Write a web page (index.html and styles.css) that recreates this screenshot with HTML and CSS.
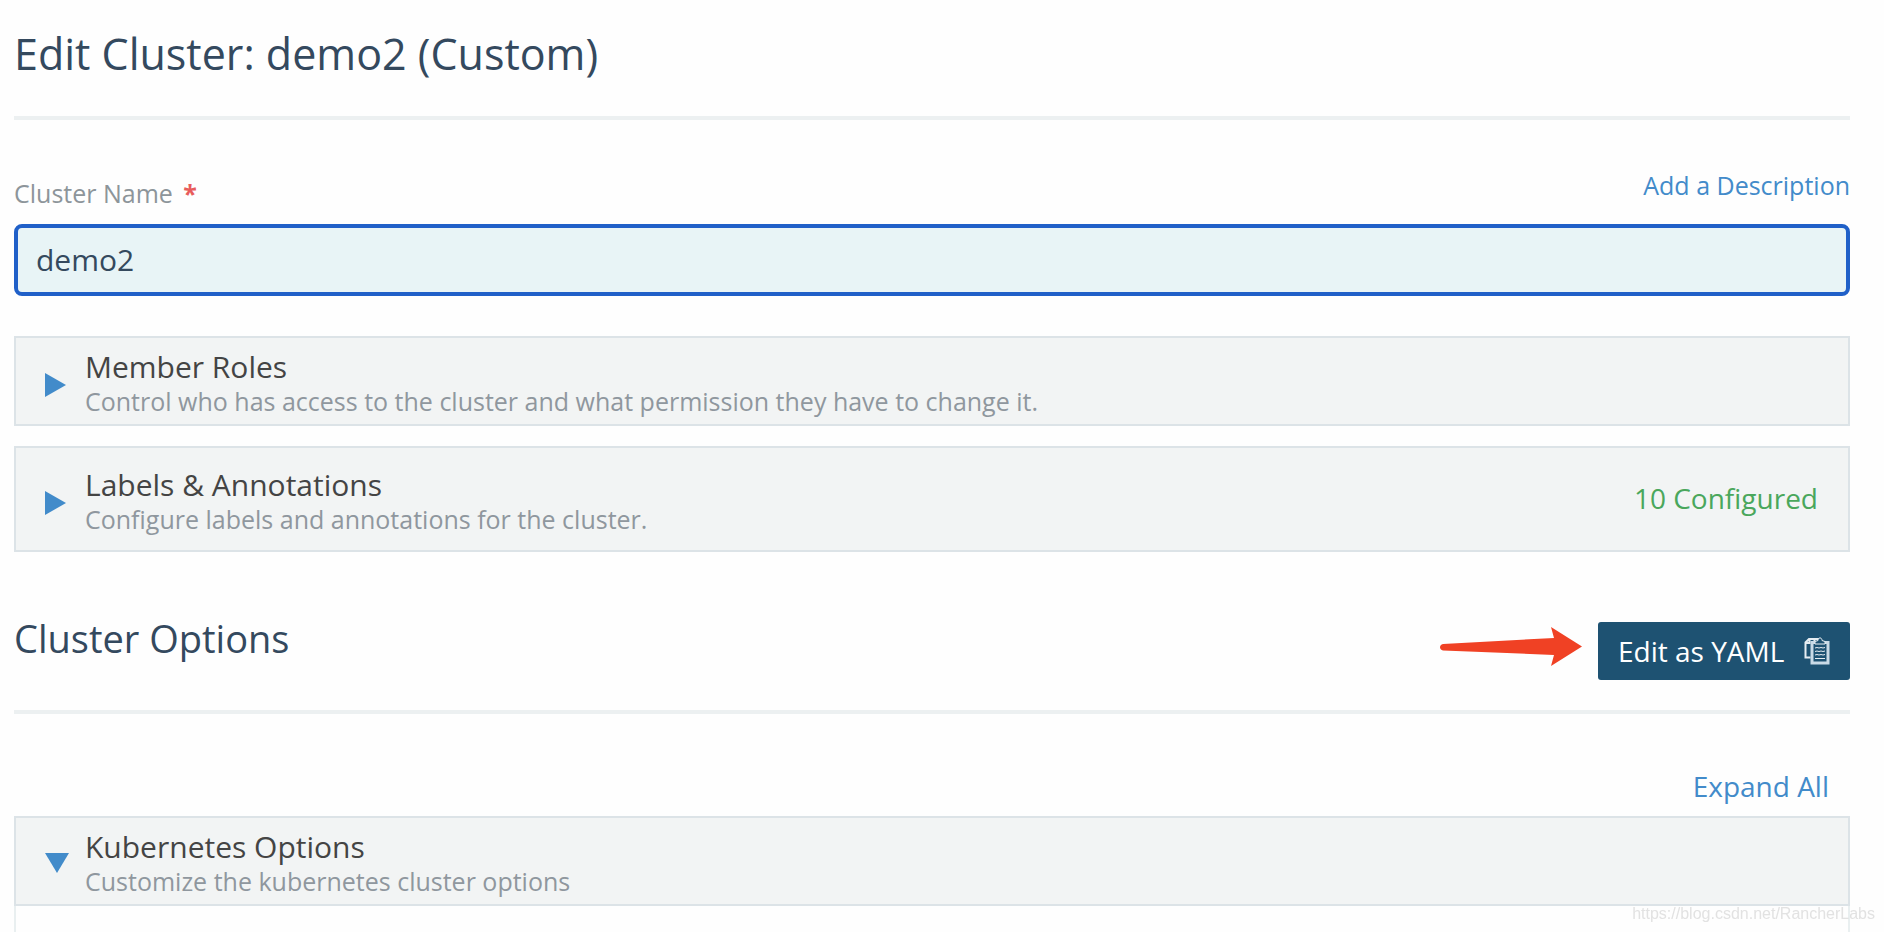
FILE: index.html
```html
<!DOCTYPE html>
<html lang="en">
<head>
  <meta charset="UTF-8">
  <meta name="viewport" content="width=device-width, initial-scale=1.0">
  <title>Edit Cluster: demo2 (Custom)</title>
  <link rel="stylesheet" href="styles.css">
</head>
<body>
  <main class="page">
    <header class="page-header">
      <h1>Edit Cluster: demo2 (Custom)</h1>
    </header>

    <div class="field-head">
      <label for="clusterName">Cluster Name <span class="required">*</span></label>
      <a class="link" href="#">Add a Description</a>
    </div>
    <input class="text-input" type="text" id="clusterName" value="demo2">

    <section class="panel">
      <button class="caret" type="button" aria-label="Expand Member Roles">
        <svg width="24" height="24" viewBox="0 0 24 24"><path d="M0 0L21 12L0 24Z"/></svg>
      </button>
      <div class="panel-text">
        <h3>Member Roles</h3>
        <p>Control who has access to the cluster and what permission they have to change it.</p>
      </div>
    </section>

    <section class="panel panel-tall">
      <button class="caret" type="button" aria-label="Expand Labels and Annotations">
        <svg width="24" height="24" viewBox="0 0 24 24"><path d="M0 0L21 12L0 24Z"/></svg>
      </button>
      <div class="panel-text">
        <h3>Labels &amp; Annotations</h3>
        <p>Configure labels and annotations for the cluster.</p>
      </div>
      <div class="panel-status">10 Configured</div>
    </section>

    <div class="section-header">
      <h2>Cluster Options</h2>
      <div class="section-actions">
        <svg class="pointer" width="142" height="40" viewBox="0 0 142 40">
          <path d="M3 17L114 11L111 0L142 19.500L111 39L114 28L3 23.500C-1 23 -1 17.500 3 17Z"/>
        </svg>
        <button class="btn" type="button">
          Edit as YAML
          <svg width="26" height="28" viewBox="0 0 26 28">
            <path class="sheet" d="M6.500 20.500H1.500V5.500L5 2H11M1.500 6H5.500V2M17 2H11L10 5"/>
            <path class="board" d="M8 5.500H24V26H8Z"/>
            <path class="clip" d="M11 7V4.500L14 3.500C14 0 18 0 18 3.500L21 4.500V7Z"/>
            <path class="lines" d="M11 11L13 10.500L15 11L17 10.500L19 11L21 10.500M11 14.500L13 14L15 14.500L17 14L19 14.500L21 14M11 18L13 17.500L15 18L17 17.500L19 18L21 17.500M11 21.500H21"/>
          </svg>
        </button>
      </div>
    </div>

    <div class="expand-row">
      <a class="link" href="#">Expand All</a>
    </div>

    <section class="panel panel-open">
      <button class="caret" type="button" aria-label="Collapse Kubernetes Options">
        <svg width="24" height="24" viewBox="0 0 24 24"><path d="M0 0H24L12 20Z"/></svg>
      </button>
      <div class="panel-text">
        <h3>Kubernetes Options</h3>
        <p>Customize the kubernetes cluster options</p>
      </div>
    </section>
    <div class="panel-body"></div>
  </main>
  <div class="watermark">https://blog.csdn.net/RancherLabs</div>
</body>
</html>
```
FILE: styles.css
```css
* {
  margin: 0;
  padding: 0;
  box-sizing: border-box;
}

body {
  background-color: #fefefe;
  color: #34495e;
  font-family: "Open Sans", "Noto Sans", sans-serif;
  font-size: 25px;
}

h1,
h2,
h3 {
  font-weight: 400;
}

.page {
  display: flex;
  flex-direction: column;
  min-height: 100vh;
  padding: 0 34px 0 14px;
}

.page-header {
  padding: 24px 0 32px;
  border-bottom: 4px solid #ecf0f1;
  margin-bottom: 47px;
}

h1 {
  font-size: 43px;
  line-height: 60px;
}

.field-head {
  display: flex;
  justify-content: space-between;
  margin-bottom: 13px;
  line-height: 36px;
}

.field-head label {
  padding-top: 8px;
  color: #8d959a;
}

.required {
  margin-left: 4px;
  color: #e85c5c;
  font-weight: 700;
}

.link {
  color: #428bca;
  text-decoration: none;
}

.link:hover {
  text-decoration: underline;
}

.text-input {
  width: 100%;
  height: 72px;
  padding: 0 18px 2px;
  margin-bottom: 40px;
  border: 4px solid #2060c8;
  border-radius: 8px;
  outline: none;
  background-color: #e8f4f6;
  color: #34495e;
  font-family: inherit;
  font-size: 30px;
}

.panel {
  display: flex;
  align-items: center;
  gap: 16px;
  padding: 11px 30px 7px 29px;
  margin-bottom: 20px;
  border: 2px solid #dce3e7;
  background-color: #f2f4f4;
}

.panel-tall {
  padding-top: 19px;
  padding-bottom: 15px;
}

.panel-open {
  margin-bottom: 0;
}

.panel-body {
  flex: 1;
  border: 2px solid #e9eff0;
  border-width: 0 2px;
}

.caret {
  width: 24px;
  height: 24px;
  margin-top: 3px;
  border: none;
  background: none;
  cursor: pointer;
}

.caret svg {
  display: block;
  fill: #428bca;
}

.panel-text {
  flex: 1;
}

.panel-text h3 {
  color: #444;
  font-size: 30px;
  line-height: 36px;
}

.panel-text p {
  color: #8f979e;
  line-height: 32px;
}

.panel-status {
  padding-bottom: 6px;
  color: #4aa75c;
  font-size: 28px;
  line-height: 36px;
}

.section-header {
  display: flex;
  justify-content: space-between;
  padding: 41px 0 30px;
  border-bottom: 4px solid #ecf0f1;
}

h2 {
  font-size: 38px;
  line-height: 50px;
}

.section-actions {
  display: flex;
  align-items: center;
  gap: 16px;
  padding-top: 9px;
}

.pointer {
  margin-bottom: 8px;
  fill: #f04124;
}

.btn {
  display: flex;
  align-items: center;
  justify-content: space-between;
  min-width: 252px;
  height: 58px;
  padding: 0 20px;
  border: none;
  border-radius: 3px;
  background-color: #1e5272;
  color: #fff;
  font-family: inherit;
  font-size: 28px;
  cursor: pointer;
}

.btn:hover {
  background-color: #17425c;
}

.btn svg {
  fill: none;
  stroke: #e6edf2;
  stroke-width: 2;
}

.btn .board {
  fill: #1e5272;
  stroke: #c9dae6;
  stroke-width: 3;
}

.btn .clip {
  fill: #1e5272;
  stroke-width: 1;
}

.btn .lines {
  stroke-width: 1;
}

.expand-row {
  padding: 54px 21px 12px;
  font-size: 28px;
  line-height: 36px;
  text-align: right;
}

.watermark {
  position: fixed;
  right: 9px;
  bottom: 8px;
  color: #e2e2e2;
  font-family: "Liberation Sans", Arial, sans-serif;
  font-size: 16px;
  line-height: 20px;
}
```
